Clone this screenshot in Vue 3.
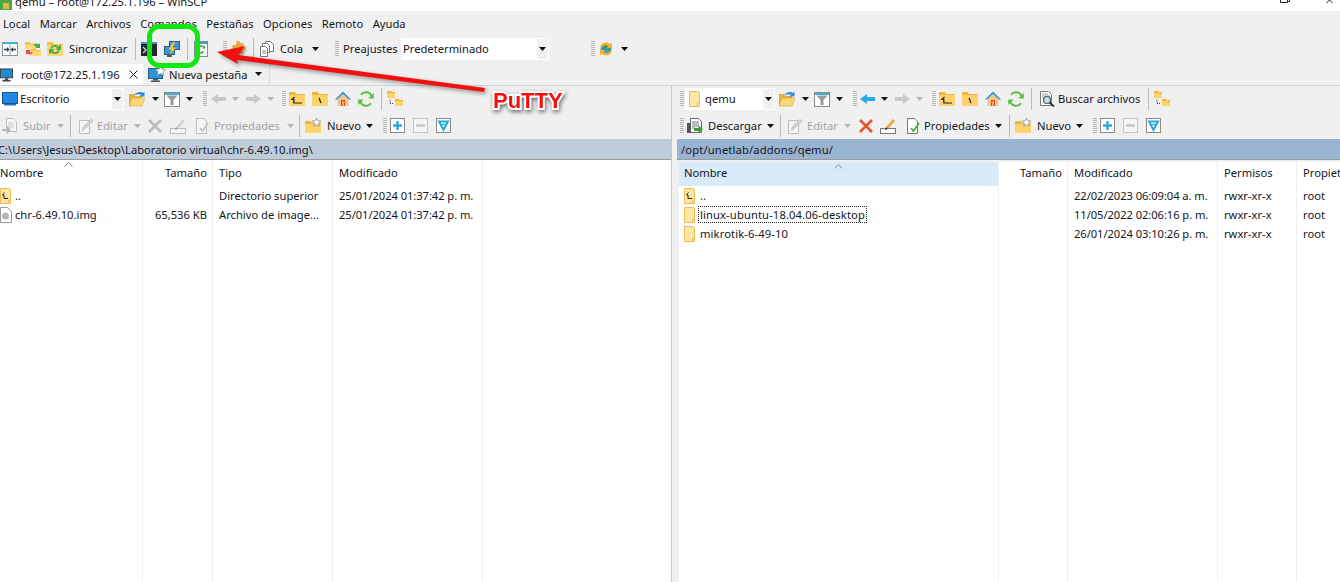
<script setup>
const menus = ['Local', 'Marcar', 'Archivos', 'Comandos', 'Pestañas', 'Opciones', 'Remoto', 'Ayuda']

const leftCols = [
  { title: 'Nombre', cls: 'c-l1', sort: true, cells: [{ text: '..', icon: 'up' }, { text: 'chr-6.49.10.img', icon: 'file' }] },
  { title: 'Tamaño', cls: 'c-l2 right', cells: [{ text: '' }, { text: '65,536 KB' }] },
  { title: 'Tipo', cls: 'c-l3', cells: [{ text: 'Directorio superior' }, { text: 'Archivo de image...' }] },
  { title: 'Modificado', cls: 'c-l4 dates', cells: [{ text: '25/01/2024 01:37:42 p. m.' }, { text: '25/01/2024 01:37:42 p. m.' }] },
  { title: '', cls: 'c-fill', cells: [] },
]

const rightCols = [
  { title: 'Nombre', cls: 'c-r1 active', sort: true, cells: [
    { text: '..', icon: 'up' },
    { text: 'linux-ubuntu-18.04.06-desktop', icon: 'folder', focus: true },
    { text: 'mikrotik-6-49-10', icon: 'folder' },
  ] },
  { title: 'Tamaño', cls: 'c-r2 right', cells: [] },
  { title: 'Modificado', cls: 'c-r3 dates', cells: [{ text: '22/02/2023 06:09:04 a. m.' }, { text: '11/05/2022 02:06:16 p. m.' }, { text: '26/01/2024 03:10:26 p. m.' }] },
  { title: 'Permisos', cls: 'c-r4', cells: [{ text: 'rwxr-xr-x' }, { text: 'rwxr-xr-x' }, { text: 'rwxr-xr-x' }] },
  { title: 'Propiet', cls: 'c-fill', cells: [{ text: 'root' }, { text: 'root' }, { text: 'root' }] },
]
</script>

<template>
  <div class="win">
    <svg class="defs" width="0" height="0">
      <defs>
        <symbol id="compare" viewBox="0 0 16 16"><rect x="0.500" y="1.500" width="15" height="13" fill="#fff" stroke="#8d9398"/><rect x="1" y="1" width="14" height="2" fill="#35b3d6"/><path d="M8 3v11" stroke="#9aa0a6"/><path d="M2 8.500h4.500M10 8.500h4" stroke="#3a3f44" stroke-width="1.300"/><path d="M5 6 7.500 8.500 5 11zM11 6 8.500 8.500 11 11z" fill="#3a3f44"/></symbol>
        <symbol id="sync1" viewBox="0 0 16 16"><path d="M0 1h5l1 1.500h5V8H0z" fill="#f3bf4d"/><rect y="3.500" width="11" height="4.500" fill="#fbd777"/><path d="M6 8h5l1 1h4v6H6z" fill="#f3bf4d"/><rect x="6" y="10" width="10" height="5" fill="#fbd777"/><path d="M8 5c1-2.500 4-3.500 5.500-1.500L15 2v5h-5l1.500-1.500C10.500 4.500 9 4.500 8 5z" fill="#4fa83e"/><path d="M8 11c-1 2.500-4 3.500-5.500 1.500L1 14V9h5l-1.500 1.500C5.500 11.500 7 11.500 8 11z" fill="#e2562d"/></symbol>
        <symbol id="sync2" viewBox="0 0 16 16"><path d="M0 1h6l1 2h9v12H0z" fill="#f3bf4d"/><rect y="4" width="16" height="11" fill="#fbd777"/><path d="M3 7.500C4 3.500 9.500 3 11.800 5.500L14 3.500V9H8.500l1.800-2C9 5.700 6 5.800 5 7.500z" fill="#4fae45"/><path d="M13 9.500c-1 4-6.500 4.500-8.800 2L2 13.500V8h5.500L5.700 10c1.300 1.300 4.300 1.200 5.300-.5z" fill="#4fae45"/></symbol>
        <symbol id="term" viewBox="0 0 16 16"><rect y="1" width="16" height="14" fill="#23272b"/><rect y="1" width="16" height="2" fill="#3f8fc4"/><path d="M2 6l3 3-3 3" fill="none" stroke="#ddd" stroke-width="1.200"/><rect x="6" y="11" width="3" height="1" fill="#ddd"/></symbol>
        <symbol id="putty" viewBox="0 0 16 16"><rect x="5.500" y="0.500" width="10" height="8" fill="#3d97d3" stroke="#2c5f85"/><rect x="0.500" y="5.500" width="10" height="8" fill="#3d97d3" stroke="#2c5f85"/><rect x="3" y="14" width="5" height="2" fill="#555"/><path d="M9 1 4.500 8.500h3L6 14l6-7.500H9L11 1z" fill="#f7c42e"/></symbol>
        <symbol id="browse" viewBox="0 0 16 16"><rect x="1.500" y="0.500" width="13" height="15" fill="#f4f6f5" stroke="#7d8f93"/><rect x="2" y="1" width="12" height="2" fill="#4a9cc5"/><path d="M11.500 7a3.500 3.500 0 0 0-6-.5M4.500 10a3.500 3.500 0 0 0 6 .5" fill="none" stroke="#45a045" stroke-width="1.600"/><path d="M11 4.500l1.500 3-3 0zM5 12.500l-1.500-3 3 0z" fill="#45a045"/></symbol>
        <symbol id="gear" viewBox="0 0 16 16"><path d="M6.500 0h3l.5 2.500 2-1 2 2-1 2 2.500.5v3l-2.500.5 1 2-2 2-2-1-.5 2.500h-3L6 14.500l-2 1-2-2 1-2L.5 11V8L3 7.500l-1-2 2-2 2 1z" fill="#eda73c"/><circle cx="8" cy="8.500" r="2.500" fill="#f7e3b2"/></symbol>
        <symbol id="queue" viewBox="0 0 16 16"><path d="M6.500 .5h5l3 3v7h-8z" fill="#fff" stroke="#777"/><path d="M3.500 2.500h5l2 2v7h-7z" fill="#fff" stroke="#777"/><path d="M1.500 5.500h5l2 2v8h-7z" fill="#fff" stroke="#777"/><path d="M3 10h4M3 12h4" stroke="#888"/></symbol>
        <symbol id="globe" viewBox="0 0 16 16"><circle cx="8" cy="8" r="5.500" fill="#3c9ac4"/><path d="M5 4l3-1 2 2-2 2-1 3-2-2zM10 9l2-1 0 3-2 1z" fill="#3f9f48"/><path d="M2 6c1-4 7-6 10-3l2-1v5h-5l1.500-2C8.500 3.500 5 4 4 6.500z" fill="#f4b130"/><path d="M14 10c-1 4-7 6-10 3l-2 1V9h5l-1.500 2c2 1.500 5.500 1 6.500-1.500z" fill="#f4b130"/></symbol>
        <symbol id="desk" viewBox="0 0 16 16"><rect x="0.500" y="1.500" width="15" height="11" fill="#1e88e5" stroke="#14569a"/><rect x="2" y="13" width="12" height="1.500" fill="#2a6fb5"/></symbol>
        <symbol id="open" viewBox="0 0 16 16"><path d="M0 3h5l1 2h7v10H0z" fill="#e9ad3e"/><path d="M3 7h13l-3 8H0z" fill="#fbd777" stroke="#d99e2f" stroke-width=".5"/><path d="M5 4.500C6.500 1 11.500 0 14 2l1.500-1.500V5.500h-5L12 4C10.500 3 7.500 3 5 4.500z" fill="#2f8fd0"/></symbol>
        <symbol id="filter" viewBox="0 0 16 16"><rect x="0.500" y="1.500" width="15" height="14" fill="#fff" stroke="#8a8a8a"/><rect x="1" y="2" width="14" height="2" fill="#41b0d8"/><path d="M2.500 4.500h11L9.500 9v5h-3V9z" fill="#9a9a9a"/></symbol>
        <symbol id="back" viewBox="0 0 16 16"><path d="M0 8l7-5v3h8v4H7v3z" fill="#2ba9dc"/></symbol>
        <symbol id="fwd" viewBox="0 0 16 16"><path d="M16 8 9 3v3H1v4h8v3z" fill="#2ba9dc"/></symbol>
        <symbol id="fup" viewBox="0 0 16 16"><path d="M0 1h6l1 2h9v12H0z" fill="#f0b53f"/><rect x="0" y="4" width="16" height="11" fill="#fbd36a"/><path d="M5.500 6 3 8.500h1.800V12H13" fill="none" stroke="#222" stroke-width="1.200"/></symbol>
        <symbol id="froot" viewBox="0 0 16 16"><path d="M0 1h6l1 2h9v12H0z" fill="#f0b53f"/><rect x="0" y="4" width="16" height="11" fill="#fbd36a"/><path d="M7 7l2 5" stroke="#222" stroke-width="1.200"/></symbol>
        <symbol id="home" viewBox="0 0 16 16"><path d="M8 1 0 8.500h2.500V15h11V8.500H16z" fill="#f2c58a"/><path d="M8 .5 0 8.500h2L8 3l6 5.500h2z" fill="#2e9ad0"/><rect x="6" y="9" width="4" height="6" fill="#d84a20"/><rect x="7" y="10" width="2" height="5" fill="#f7a36b"/></symbol>
        <symbol id="refresh" viewBox="0 0 16 16"><path d="M13.800 6A6 6 0 0 0 3 3.800M2.200 10A6 6 0 0 0 13 12.200" fill="none" stroke="#62bd3c" stroke-width="2"/><path d="M15.800 2v5.500h-5.500zM.2 14V8.500h5.500z" fill="#62bd3c"/></symbol>
        <symbol id="tree" viewBox="0 0 16 16"><path d="M0 0h4l1 1h3v6H0z" fill="#f0b53f"/><rect y="2" width="8" height="5" fill="#fbd36a"/><path d="M8 8h4l1 1h3v6H8z" fill="#f0b53f"/><rect x="8" y="10" width="8" height="5" fill="#fbd36a"/><path d="M3 8.500v4h4" fill="none" stroke="#333" stroke-dasharray="1 1"/></symbol>
        <symbol id="subir" viewBox="0 0 16 16"><path d="M4.500 .5h7l3 3v10h-10z" fill="#fff" stroke="#777"/><path d="M6 5h6M6 7h6M6 9h6" stroke="#999"/><path d="M0 11h5V8l4 4-4 4v-3H0z" fill="#666"/></symbol>
        <symbol id="dl" viewBox="0 0 16 16"><path d="M3.500 .5h8l3 3v11h-11z" fill="#fff" stroke="#666"/><path d="M5 4h7M5 6h7M5 8h7M5 10h3" stroke="#777"/><rect x="0" y="5" width="4" height="10" fill="#555"/><path d="M16 11l-4.500-3.500V10H7v3h4.500v2.500z" fill="#3f9a3a"/></symbol>
        <symbol id="edit" viewBox="0 0 16 16"><path d="M1.500 2.500h10v13h-10z" fill="#fff" stroke="#777"/><path d="M4 13l1-4 8-8 2 2-8 8z" fill="#c9a15a" stroke="#8a6a30" stroke-width=".5"/></symbol>
        <symbol id="del" viewBox="0 0 16 16"><path d="M2 2l12 12M14 2 2 14" stroke="#e2562d" stroke-width="2.600"/></symbol>
        <symbol id="rename" viewBox="0 0 16 16"><rect x=".5" y="10.500" width="15" height="5" fill="#fff" stroke="#777"/><path d="M5 12l1-3 7-8 2 2-7 8z" fill="#eda73c"/><path d="M5 12l1-3 2 2z" fill="#333"/></symbol>
        <symbol id="prop" viewBox="0 0 16 16"><path d="M2.500 .5h7l3 3v12h-10z" fill="#fff" stroke="#777"/><path d="M6 10l2.500 3L14 5" fill="none" stroke="#4aa84a" stroke-width="1.800"/></symbol>
        <symbol id="newf" viewBox="0 0 16 16"><path d="M0 3h6l1 2h9v10H0z" fill="#f0b53f"/><rect y="6" width="16" height="9" fill="#fbd36a"/><path d="M11.500 0l1.300 2.700 3 .4-2.200 2 .6 3-2.700-1.500-2.700 1.500.6-3-2.200-2 3-.4z" fill="#fff" stroke="#888" stroke-width=".8"/></symbol>
        <symbol id="plus" viewBox="0 0 16 16"><rect x=".5" y=".5" width="14" height="14" fill="#fff" stroke="#888"/><path d="M3 7.500h9M7.500 3v9" stroke="#2ba9dc" stroke-width="2.400"/></symbol>
        <symbol id="minus" viewBox="0 0 16 16"><rect x=".5" y=".5" width="14" height="14" fill="#fff" stroke="#888"/><path d="M3 7.500h9" stroke="#888" stroke-width="2.400"/></symbol>
        <symbol id="ffilter" viewBox="0 0 16 16"><rect x=".5" y=".5" width="14" height="14" fill="#fff" stroke="#888"/><path d="M3 3.500h9L7.500 12z" fill="none" stroke="#2ba9dc" stroke-width="2"/><path d="M4.500 6.500h6" stroke="#2ba9dc" stroke-width="1.500"/></symbol>
        <symbol id="search" viewBox="0 0 16 16"><path d="M1.500 .5h8l3 3v11h-11z" fill="#fff" stroke="#777"/><path d="M3 3h6M3 5h8M3 7h3" stroke="#999"/><circle cx="8" cy="9" r="3.500" fill="#bfe0ee" stroke="#555" stroke-width="1.200"/><path d="M10.500 11.500 15 15.500" stroke="#333" stroke-width="2"/></symbol>
        <symbol id="folder" viewBox="0 0 12 16"><path d="M.5 .5h9l1 1v14H.5z" fill="#fde7a5" stroke="#e9bd55"/><path d="M8.500 15v-3h2" fill="none" stroke="#e9bd55"/></symbol>
        <symbol id="up" viewBox="0 0 12 16"><path d="M.5 .5h9l1 1v14H.5z" fill="#fde7a5" stroke="#e9bd55"/><path d="M8.500 15v-3h2" fill="none" stroke="#e9bd55"/><path d="M4.500 4.500 2.500 7h1.500v3.500H8" fill="none" stroke="#222"/></symbol>
        <symbol id="file" viewBox="0 0 12 16"><path d="M.5 .5h7l4 4v11H.5z" fill="#fff" stroke="#999"/><circle cx="5.500" cy="9" r="3.500" fill="#b5b5b5"/></symbol>
        <symbol id="mon" viewBox="0 0 16 16"><rect x=".5" y=".5" width="15" height="11" fill="#1f8ad6" stroke="#333"/><rect x="6" y="12" width="4" height="2" fill="#444"/><rect x="3" y="14" width="10" height="2" fill="#444"/></symbol>
        <symbol id="monstar" viewBox="0 0 18 16"><rect x=".5" y="2.500" width="14" height="10" fill="#2d93d6" stroke="#2a5c80"/><rect x="5" y="13" width="5" height="1.500" fill="#555"/><rect x="3" y="14.500" width="9" height="1.500" fill="#555"/><path d="M12.500 0l1.500 3 3.500.5-2.500 2.300.6 3.400-3.100-1.700-3.100 1.700.6-3.400L7.500 3.500 11 3z" fill="#fff" stroke="#888" stroke-width=".7"/></symbol>
      </defs>
    </svg>

    <div class="titlebar">
      <svg class="title-ico" viewBox="0 0 12 12"><rect width="12" height="12" fill="#4aa84a"/><rect x="3" y="5" width="6" height="6" fill="#eab545"/></svg>
      <span class="title-text">qemu – root@172.25.1.196 – WinSCP</span>
      <svg class="win-restore" viewBox="0 0 10 3"><path d="M.5 0v2.500h7V0M7.500 1.500h2V0" fill="none" stroke="#222" /></svg>
      <svg class="win-close" viewBox="0 0 7 3"><path d="M.5 3 3.500 0l3 3" fill="none" stroke="#222" /></svg>
    </div>

    <div class="menubar">
      <span v-for="m in menus" :key="m">{{ m }}</span>
    </div>

    <div class="toolbar top">
      <svg class="ic"><use href="#compare" /></svg>
      <svg class="ic m7"><use href="#sync1" /></svg>
      <svg class="ic m6"><use href="#sync2" /></svg>
      <span class="lbl m6 w58">Sincronizar</span>
      <i class="sep m8"></i>
      <svg class="ic m5"><use href="#term" /></svg>
      <svg class="ic m7"><use href="#putty" /></svg>
      <i class="sep m7"></i>
      <svg class="ic m5"><use href="#browse" /></svg>
      <i class="grip m14"></i>
      <svg class="ic m3"><use href="#gear" /></svg>
      <i class="sep m7"></i>
      <svg class="ic m5"><use href="#queue" /></svg>
      <span class="lbl m5 w24">Cola</span>
      <i class="caret m8"></i>
      <i class="grip m16"></i>
      <span class="lbl m4 w53">Preajustes</span>
      <div class="combo m5 preset"><span class="combo-text">Predeterminado</span><b class="combo-btn"><i class="caret"></i></b></div>
      <i class="grip m42"></i>
      <svg class="ic m3"><use href="#globe" /></svg>
      <i class="caret m7"></i>
    </div>

    <div class="tabs">
      <div class="tab on">
        <svg class="tab-mon"><use href="#mon" /></svg>
        <span class="tab-text">root@172.25.1.196</span>
        <svg class="tab-x" viewBox="0 0 9 9"><path d="M.5.5l8 8M8.500.5l-8 8" stroke="#222" fill="none" /></svg>
      </div>
      <div class="tab rest">
        <svg class="tab-star"><use href="#monstar" /></svg>
        <span class="tab-text2">Nueva pestaña</span>
        <i class="caret m8"></i>
      </div>
    </div>

    <div class="panels">
      <section class="panel left">
        <div class="toolbar row">
          <div class="combo c-desk"><svg class="ic m2"><use href="#desk" /></svg><span class="combo-text t2">Escritorio</span><b class="combo-btn"><i class="caret"></i></b></div>
          <svg class="ic m5"><use href="#open" /></svg>
          <i class="caret m7"></i>
          <svg class="ic m5"><use href="#filter" /></svg>
          <i class="caret m6"></i>
          <i class="grip m10"></i>
          <svg class="ic m4 off"><use href="#back" /></svg>
          <i class="caret m5 dim"></i>
          <svg class="ic m6 off"><use href="#fwd" /></svg>
          <i class="caret m6 dim"></i>
          <i class="grip m8"></i>
          <svg class="ic m3"><use href="#fup" /></svg>
          <svg class="ic m7"><use href="#froot" /></svg>
          <svg class="ic m7"><use href="#home" /></svg>
          <svg class="ic m7"><use href="#refresh" /></svg>
          <i class="sep m7"></i>
          <svg class="ic m5"><use href="#tree" /></svg>
        </div>
        <div class="toolbar row row2 start2">
          <svg class="ic off"><use href="#subir" /></svg>
          <span class="lbl m5 w27 gray">Subir</span>
          <i class="caret m7 dim"></i>
          <i class="sep m6"></i>
          <svg class="ic m7 off"><use href="#edit" /></svg>
          <span class="lbl m3 w30 gray">Editar</span>
          <i class="caret m7 dim"></i>
          <svg class="ic m6 off"><use href="#del" /></svg>
          <svg class="ic m7 off"><use href="#rename" /></svg>
          <svg class="ic m8 off"><use href="#prop" /></svg>
          <span class="lbl m4 w65 gray">Propiedades</span>
          <i class="caret m8 dim"></i>
          <i class="sep m5"></i>
          <svg class="ic m5"><use href="#newf" /></svg>
          <span class="lbl m6 w34">Nuevo</span>
          <i class="caret m5"></i>
          <i class="grip m10"></i>
          <svg class="ic m3"><use href="#plus" /></svg>
          <svg class="ic m7 off"><use href="#minus" /></svg>
          <svg class="ic m7"><use href="#ffilter" /></svg>
        </div>
        <div class="pathbar idle"><span class="path-l">C:\Users\Jesus\Desktop\Laboratorio virtual\chr-6.49.10.img\</span></div>
        <div class="list">
          <div v-for="c in leftCols" :key="c.cls" class="col" :class="c.cls">
            <div class="head">{{ c.title }}<svg v-if="c.sort" class="sort" viewBox="0 0 9 5"><path d="M.5 4.500l4-4 4 4" fill="none" stroke="#888" /></svg></div>
            <div v-for="(r, i) in c.cells" :key="i" class="cell">
              <svg v-if="r.icon" class="fico"><use :href="'#' + r.icon" /></svg>
              <span>{{ r.text }}</span>
            </div>
          </div>
        </div>
      </section>

      <div class="split"></div>

      <section class="panel rightp">
        <div class="toolbar row start3">
          <i class="grip"></i>
          <div class="combo m1 c-qemu"><svg class="fico small m4"><use href="#folder" /></svg><span class="combo-text t3">qemu</span><b class="combo-btn"><i class="caret"></i></b></div>
          <svg class="ic m4"><use href="#open" /></svg>
          <i class="caret m7"></i>
          <svg class="ic m5"><use href="#filter" /></svg>
          <i class="caret m6"></i>
          <i class="grip m10"></i>
          <svg class="ic m3"><use href="#back" /></svg>
          <i class="caret m5"></i>
          <svg class="ic m6 off"><use href="#fwd" /></svg>
          <i class="caret m6 dim"></i>
          <i class="grip m9"></i>
          <svg class="ic m3"><use href="#fup" /></svg>
          <svg class="ic m7"><use href="#froot" /></svg>
          <svg class="ic m7"><use href="#home" /></svg>
          <svg class="ic m7"><use href="#refresh" /></svg>
          <i class="sep m7"></i>
          <svg class="ic m7"><use href="#search" /></svg>
          <span class="lbl m3 w82">Buscar archivos</span>
          <i class="sep m8"></i>
          <svg class="ic m5"><use href="#tree" /></svg>
        </div>
        <div class="toolbar row row2 start3">
          <i class="grip"></i>
          <svg class="ic m3"><use href="#dl" /></svg>
          <span class="lbl m5 w52">Descargar</span>
          <i class="caret m7"></i>
          <i class="sep m6"></i>
          <svg class="ic m6 off"><use href="#edit" /></svg>
          <span class="lbl m4 w30 gray">Editar</span>
          <i class="caret m7 dim"></i>
          <svg class="ic m7"><use href="#del" /></svg>
          <svg class="ic m6"><use href="#rename" /></svg>
          <svg class="ic m9"><use href="#prop" /></svg>
          <span class="lbl m3 w65">Propiedades</span>
          <i class="caret m6"></i>
          <i class="sep m7"></i>
          <svg class="ic m5"><use href="#newf" /></svg>
          <span class="lbl m6 w34">Nuevo</span>
          <i class="caret m5"></i>
          <i class="grip m10"></i>
          <svg class="ic m3"><use href="#plus" /></svg>
          <svg class="ic m7 off"><use href="#minus" /></svg>
          <svg class="ic m7"><use href="#ffilter" /></svg>
        </div>
        <div class="pathbar current"><span class="path-r">/opt/unetlab/addons/qemu/</span></div>
        <div class="list list-r">
          <div v-for="c in rightCols" :key="c.cls" class="col" :class="c.cls">
            <div class="head">{{ c.title }}<svg v-if="c.sort" class="sort" viewBox="0 0 9 5"><path d="M.5 4.500l4-4 4 4" fill="none" stroke="#888" /></svg></div>
            <div v-for="(r, i) in c.cells" :key="i" class="cell">
              <svg v-if="r.icon" class="fico"><use :href="'#' + r.icon" /></svg>
              <span :class="{ focus: r.focus }">{{ r.text }}</span>
            </div>
          </div>
        </div>
      </section>
    </div>

    <!-- annotations drawn on top of the screenshot -->
    <svg class="marks" viewBox="0 0 1340 582">
      <rect x="149.500" y="26.500" width="48" height="39" rx="10" fill="none" stroke="#10e610" stroke-width="5" />
      <path class="arrow" d="M217 52 245 46 238 55 485 88 484 92 237 60 238 64z" fill="#f01010" />
    </svg>
    <div class="putty-note">PuTTY</div>
  </div>
</template>

<style>
html, body {
  margin: 0;
  background: #fff;
}
</style>

<style scoped>
.win {
  position: relative;
  width: 1340px;
  height: 582px;
  overflow: hidden;
  background: #f0f0f0;
  font-family: "Noto Sans", "Open Sans", sans-serif;
  font-size: 11.2px;
  color: #14141c;
  display: flex;
  flex-direction: column;
}

.defs {
  position: absolute;
}

.titlebar {
  height: 11px;
  flex: none;
  background: #fff;
  display: flex;
  align-items: flex-end;
  overflow: hidden;
  position: relative;
}
.title-ico {
  width: 12px;
  height: 12px;
  flex: none;
  margin-bottom: 1px;
}
.title-text {
  margin-left: 3px;
  line-height: 16px;
  height: 16px;
  flex: none;
  transform: translateY(-1px);
}
.win-restore {
  margin-left: auto;
  width: 10px;
  height: 3px;
  margin-right: 36px;
  margin-bottom: 8px;
}
.win-close {
  width: 7px;
  height: 3px;
  margin-right: 7px;
  margin-bottom: 8px;
}

.menubar {
  height: 25px;
  flex: none;
  display: flex;
  align-items: center;
  gap: 9.5px;
  padding-left: 3px;
}

.toolbar {
  display: flex;
  align-items: center;
  flex: none;
}
.top {
  height: 26px;
  margin-bottom: 1px;
  padding-left: 2px;
}
.row {
  height: 26px;
}
.row2 {
  margin-top: 1px;
}
.start2 {
  padding-left: 2px;
}
.start3 {
  padding-left: 3px;
}

.ic {
  width: 16px;
  height: 16px;
  flex: none;
}
.off {
  filter: grayscale(1);
  opacity: 0.42;
}
.lbl,
.combo-text {
  flex: none;
  white-space: nowrap;
  padding-bottom: 2px;
}
.gray {
  color: #a3a3a3;
}
.w24 { width: 24px; }
.w27 { width: 27px; }
.w30 { width: 30px; }
.w34 { width: 34px; }
.w52 { width: 52px; }
.w53 { width: 53px; }
.w58 { width: 58px; }
.w65 { width: 65px; }
.w82 { width: 82px; }

.m1 { margin-left: 1px; }
.m2 { margin-left: 2px; }
.m3 { margin-left: 3px; }
.m4 { margin-left: 4px; }
.m5 { margin-left: 5px; }
.m6 { margin-left: 6px; }
.m7 { margin-left: 7px; }
.m8 { margin-left: 8px; }
.m9 { margin-left: 9px; }
.m10 { margin-left: 10px; }
.m14 { margin-left: 14px; }
.m16 { margin-left: 16px; }
.m42 { margin-left: 42px; }

.sep {
  width: 1px;
  height: 22px;
  background: #b9b9b9;
  flex: none;
}
.grip {
  width: 4px;
  height: 16px;
  flex: none;
  background: repeating-linear-gradient(to bottom, #b5b5b5 0 1px, transparent 1px 2px);
}
.caret {
  width: 7px;
  height: 4px;
  flex: none;
  background: #111;
  clip-path: polygon(0 0, 100% 0, 50% 100%);
}
.caret.dim {
  background: #b4b4b4;
}

.combo {
  height: 22px;
  background: #fff;
  display: flex;
  align-items: center;
  flex: none;
  box-sizing: border-box;
  position: relative;
}
.combo-btn {
  margin-left: auto;
  margin-right: 1px;
  width: 11px;
  height: 20px;
  background: #f0f0f0;
  display: flex;
  align-items: center;
  justify-content: center;
}
.preset {
  width: 148px;
  padding-left: 2px;
}
.c-desk {
  width: 124px;
}
.c-qemu {
  width: 90px;
}
.t2 {
  margin-left: 2px;
}
.t3 {
  margin-left: 4px;
}

.tabs {
  height: 23px;
  flex: none;
  display: flex;
  border-bottom: 1px solid #d2d2d2;
  box-sizing: border-box;
}
.tab {
  display: flex;
  align-items: center;
  flex: none;
}
.tab.on {
  width: 143px;
  background: #fff;
  margin-top: 1px;
}
.tab.rest {
  width: 127px;
  border-right: 1px solid #d9d9d9;
  box-sizing: border-box;
}
.tab-mon {
  width: 13px;
  height: 14px;
  flex: none;
}
.tab-text {
  margin-left: 8px;
  width: 96px;
  flex: none;
  white-space: nowrap;
}
.tab-x {
  width: 9px;
  height: 9px;
  margin-left: 12px;
  flex: none;
}
.tab-star {
  width: 18px;
  height: 16px;
  margin-left: 5px;
  flex: none;
}
.tab-text2 {
  margin-left: 3px;
  width: 78px;
  flex: none;
  white-space: nowrap;
}

.panels {
  flex: 1;
  display: flex;
  min-height: 0;
}
.panel {
  display: flex;
  flex-direction: column;
  min-width: 0;
}
.left {
  width: 671px;
  flex: none;
}
.rightp {
  flex: 1;
}
.split {
  width: 6px;
  flex: none;
  border-left: 1px solid #c8c8c8;
  box-sizing: border-box;
}

.pathbar {
  height: 21px;
  flex: none;
  display: flex;
  align-items: center;
  border-bottom: 1px solid #9a9a9a;
  box-sizing: border-box;
  white-space: nowrap;
  overflow: hidden;
}
.idle {
  background: #bfcddb;
}
.current {
  background: #99b4d1;
}
.path-l {
  margin-left: -2px;
}
.path-r {
  margin-left: 4px;
  letter-spacing: 0.15px;
}

.list {
  flex: 1;
  display: flex;
  background: #fff;
  min-height: 0;
  overflow: hidden;
}
.list-r {
  margin-left: 2px;
  margin-top: 2px;
}

.col {
  flex: none;
  border-right: 1px solid #f0f0f0;
  box-sizing: border-box;
  padding-left: 6px;
  position: relative;
}
.head {
  height: 26px;
  padding-bottom: 2px;
  box-sizing: border-box;
  display: flex;
  align-items: center;
  white-space: nowrap;
  margin-left: -6px;
  padding-left: 6px;
}
.list-r .head {
  height: 24px;
  padding-bottom: 3px;
}
.cell {
  height: 19px;
  display: flex;
  align-items: center;
  white-space: nowrap;
}
.dates .cell {
  letter-spacing: -0.07px;
}
.c-l1 { width: 143px; padding-left: 0; }
.c-l1 .head { margin-left: 0; padding-left: 0; }
.c-l2 { width: 70px; }
.c-l3 { width: 120px; }
.c-l4 { width: 150px; }
.c-r1 { width: 320px; padding-left: 5px; }
.c-r1 .head { margin-left: -5px; padding-left: 5px; background: #d9ebf9; }
.c-r1 .cell { letter-spacing: 0.12px; }
.c-r1 .fico { margin-right: 4px; }
.c-r2 { width: 69px; }
.c-r3 { width: 150px; }
.c-r4 { width: 79px; }
.c-fill {
  flex: 1;
  border-right: none;
}
.right .head,
.right .cell {
  justify-content: flex-end;
  padding-right: 5px;
}
.sort {
  position: absolute;
  top: 2px;
  left: 64px;
  width: 9px;
  height: 5px;
}
.c-r1 .sort {
  left: 155px;
}
.fico {
  width: 12px;
  height: 16px;
  flex: none;
  margin-right: 3px;
}
.fico.small {
  margin-right: 0;
}
.focus {
  outline: 1px dotted #222;
  padding: 0 1px;
  margin-left: -1px;
  line-height: 15px;
}

.marks {
  position: absolute;
  inset: 0;
  width: 1340px;
  height: 582px;
  pointer-events: none;
}
.arrow {
  filter: drop-shadow(2px 2px 2px rgba(0, 0, 0, 0.4));
}
.putty-note {
  position: absolute;
  left: 493px;
  top: 88px;
  font-family: "Liberation Sans", sans-serif;
  font-weight: 700;
  font-size: 22px;
  line-height: 26px;
  color: #f50f0f;
  -webkit-text-stroke: 4px #fff;
  paint-order: stroke fill;
  filter: drop-shadow(1px 2px 2px rgba(0, 0, 0, 0.55));
}
</style>
